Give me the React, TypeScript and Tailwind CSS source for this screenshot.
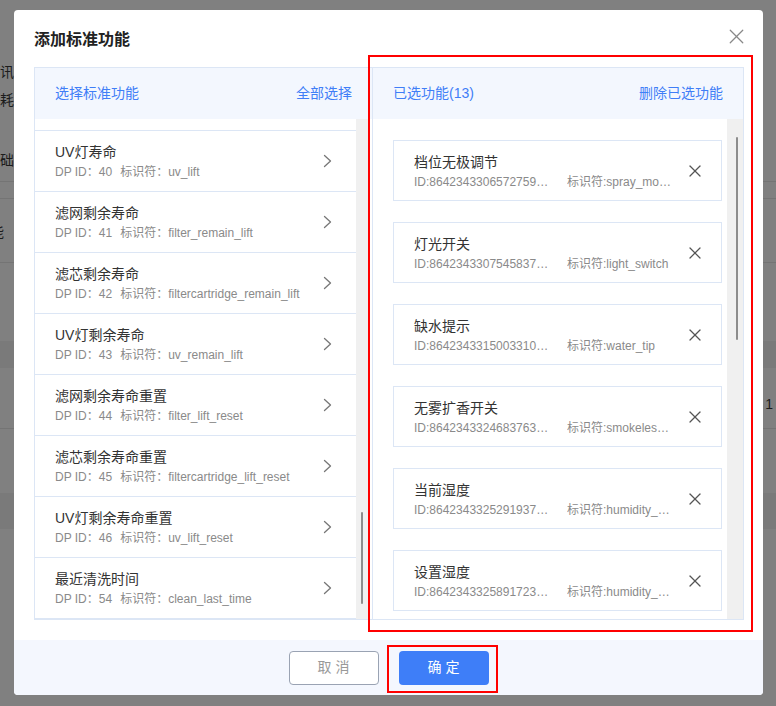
import { X } from 'lucide-react'

const FONT = { fontFamily: '"Liberation Sans", "Noto Sans CJK SC", sans-serif' }

const STD_ROWS = [
  { name: 'UV灯寿命', dp: 40, code: 'uv_lift' },
  { name: '滤网剩余寿命', dp: 41, code: 'filter_remain_lift' },
  { name: '滤芯剩余寿命', dp: 42, code: 'filtercartridge_remain_lift' },
  { name: 'UV灯剩余寿命', dp: 43, code: 'uv_remain_lift' },
  { name: '滤网剩余寿命重置', dp: 44, code: 'filter_lift_reset' },
  { name: '滤芯剩余寿命重置', dp: 45, code: 'filtercartridge_lift_reset' },
  { name: 'UV灯剩余寿命重置', dp: 46, code: 'uv_lift_reset' },
  { name: '最近清洗时间', dp: 54, code: 'clean_last_time' },
]

const PICKED = [
  { name: '档位无极调节', id: '8642343306572759040', code: 'spray_mode_level' },
  { name: '灯光开关', id: '8642343307545837568', code: 'light_switch' },
  { name: '缺水提示', id: '8642343315003310080', code: 'water_tip' },
  { name: '无雾扩香开关', id: '8642343324683763712', code: 'smokeless_switch' },
  { name: '当前湿度', id: '8642343325291937792', code: 'humidity_current' },
  { name: '设置湿度', id: '8642343325891723264', code: 'humidity_setting' },
]

// the dimmed page behind the dialog, only slivers of it show
function BackPage() {
  return (
    <div className="flex flex-col w-[776px] h-[706px] bg-[#808080] text-[14px] text-[#1c1c1c] overflow-hidden">
      <div className="h-[61px] shrink-0" />
      <div className="h-[22px] leading-[22px] -ml-[14px] shrink-0">通讯</div>
      <div className="h-[6px] shrink-0" />
      <div className="h-[22px] leading-[22px] -ml-[14px] shrink-0">功耗</div>
      <div className="h-[38px] shrink-0" />
      <div className="h-[22px] leading-[22px] -ml-[14px] shrink-0">基础信息</div>
      <div className="h-[10px] shrink-0" />
      <div className="h-[17px] border-t border-[#747474] shrink-0" />
      <div className="h-[23px] border-t border-[#747474] shrink-0" />
      <div className="h-[22px] leading-[22px] -ml-[24px] shrink-0">性能</div>
      <div className="h-[19px] shrink-0" />
      <div className="h-[79px] border-t border-[#747474] shrink-0" />
      <div className="h-[27px] bg-[#7a7a7a] shrink-0" />
      <div className="h-[25px] shrink-0" />
      <div className="h-[22px] leading-[22px] flex justify-end pr-[3px] shrink-0">1</div>
      <div className="h-[13px] shrink-0" />
      <div className="h-[65px] border-t border-[#747474] shrink-0" />
      <div className="h-[36px] bg-[#7a7a7a] shrink-0" />
    </div>
  )
}

function Chevron() {
  return (
    <svg width="9" height="14" viewBox="0 0 9 14" className="shrink-0">
      <polyline points="1.5,1.5 7.5,7 1.5,12.5" fill="none" stroke="#777" strokeWidth="1.3" strokeLinecap="round" strokeLinejoin="round" />
    </svg>
  )
}

function FakeTrack({ thumbTop, thumbH, w }: { thumbTop: number; thumbH: number; w: string }) {
  return (
    <div className={`${w} shrink-0 bg-[#f0f0f0] flex flex-col items-end pr-[5px]`}>
      <div className="w-[2px] rounded bg-[#8c8c8c]" style={{ marginTop: thumbTop, height: thumbH }} />
    </div>
  )
}

function StdPanel() {
  return (
    <div className="w-[338px] shrink-0 flex flex-col border-l border-y border-[#dce6f5]">
      <div className="h-[51px] shrink-0 flex items-center justify-between pl-[20px] pr-[20px] bg-[#f3f7fe] text-[14px] text-[#3f7ef7]">
        <span>选择标准功能</span>
        <span>全部选择</span>
      </div>
      <div className="flex-1 min-h-0 flex bg-white">
        <div className="w-[321px] shrink-0 flex flex-col overflow-hidden">
          <div className="h-[12px] shrink-0 border-b border-[#dce6f5]" />
          {STD_ROWS.map((r) => (
            <div key={r.dp} className="h-[61px] shrink-0 flex items-center border-b border-[#dce6f5] pl-[20px] pr-[24px]">
              <div className="flex-1 min-w-0 flex flex-col">
                <span className="text-[14px] leading-[20px] text-[#333]">{r.name}</span>
                <span className="mt-[2px] text-[12px] leading-[16px] text-[#8a8a8a] whitespace-nowrap">
                  DP ID：{r.dp}<span className="ml-[8px]">标识符：{r.code}</span>
                </span>
              </div>
              <Chevron />
            </div>
          ))}
        </div>
        <FakeTrack w="w-[12px]" thumbTop={393} thumbH={92} />
        <div className="w-[4px] shrink-0" />
      </div>
    </div>
  )
}

function PickedPanel() {
  return (
    <div className="w-[372px] shrink-0 flex flex-col border border-[#dce6f5]">
      <div className="h-[51px] shrink-0 flex items-center justify-between pl-[20px] pr-[20px] bg-[#f3f7fe] text-[14px] text-[#3f7ef7]">
        <span>已选功能(13)</span>
        <span>删除已选功能</span>
      </div>
      <div className="flex-1 min-h-0 flex bg-white">
        <div className="w-[349px] shrink-0 flex flex-col gap-[21px] pt-[21px] pl-[20px] overflow-hidden">
          {PICKED.map((p) => (
            <div key={p.id} className="h-[61px] shrink-0 flex items-center border border-[#dce6f5] pl-[20px] pr-[16px]">
              <div className="flex-1 min-w-0 flex flex-col">
                <span className="text-[14px] leading-[20px] text-[#333]">{p.name}</span>
                <div className="mt-[2px] flex text-[12px] leading-[16px] text-[#8a8a8a] whitespace-nowrap">
                  <span className="w-[140px] truncate">ID:{p.id}</span>
                  <span className="ml-[13px] w-[106px] truncate">标识符:{p.code}</span>
                </div>
              </div>
              <X size={20} strokeWidth={1.5} className="text-[#555] shrink-0" />
            </div>
          ))}
        </div>
        <div className="w-[5px] shrink-0" />
        <FakeTrack w="w-[16px]" thumbTop={18} thumbH={203} />
      </div>
    </div>
  )
}

export default function App() {
  return (
    <div className="relative w-[776px] h-[706px] overflow-hidden" style={FONT}>
      <BackPage />

      {/* dialog */}
      <div className="absolute left-[14px] top-[10px] w-[749px] h-[685px] bg-white rounded-[4px] overflow-hidden flex flex-col">
        <div className="h-[57px] shrink-0 flex items-center justify-between pl-[20px] pr-[14px] pt-[2px]">
          <span className="text-[16px] font-bold text-[#222]">添加标准功能</span>
          <X size={25} strokeWidth={1.2} className="text-[#888] -mt-[6px]" />
        </div>
        <div className="h-[553px] shrink-0 flex pl-[20px]">
          <StdPanel />
          <PickedPanel />
        </div>
        <div className="h-[20px] shrink-0" />
        <div className="flex-1 bg-[#f4f7fe] flex items-center justify-center gap-[20px]">
          <button className="w-[90px] h-[34px] rounded-[4px] border border-[#9aa3b3] bg-white text-[14px] text-[#999] tracking-[4px] pl-[4px]">
            取消
          </button>
          <button className="w-[90px] h-[34px] rounded-[4px] bg-[#3e7ef8] text-[14px] text-white tracking-[4px] pl-[4px]">
            确定
          </button>
        </div>
      </div>

      {/* review annotations */}
      <div className="absolute left-[368px] top-[55px] w-[385px] h-[577px] border-2 border-[#ff0000]" />
      <div className="absolute left-[387px] top-[645px] w-[111px] h-[48px] border-2 border-[#ff0000]" />
    </div>
  )
}
